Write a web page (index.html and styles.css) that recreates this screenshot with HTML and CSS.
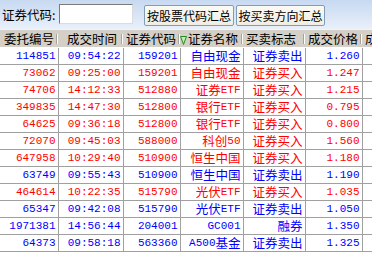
FILE: index.html
```html
<!DOCTYPE html>
<html lang="zh">
<head>
<meta charset="utf-8">
<title>成交查询</title>
<link rel="stylesheet" href="styles.css">
</head>
<body>
<div class="toolbar">
  <span class="label">证券代码:</span>
  <span class="input"></span>
  <button class="btn btn1">按股票代码汇总</button>
  <button class="btn btn2">按买卖方向汇总</button>
</div>
<table class="grid">
  <colgroup>
    <col class="w1"><col class="w2"><col class="w3"><col class="w4"><col class="w5"><col class="w6"><col class="w7">
  </colgroup>
  <thead>
    <tr>
      <th>委托编号</th>
      <th class="pl2">成交时间</th>
      <th class="pl1">证券代码</th>
      <th class="sorted"><svg class="tri" width="7" height="9" viewBox="0 0 7 9"><polygon points="0.5,0.5 6.5,0.5 3.5,8.5" fill="#c8e6b8" stroke="#1f8f1f" stroke-width="1"/></svg>证券名称</th>
      <th class="pl1">买卖标志</th>
      <th class="pl1">成交价格</th>
      <th class="pl1">成交</th>
    </tr>
  </thead>
  <tbody>
    <tr class="sell"><td>114851</td><td>09:54:22</td><td>159201</td><td><span class="c">自由现金</span></td><td><span class="c">证券卖出</span></td><td>1.260</td><td></td></tr>
    <tr class="buy"><td>73062</td><td>09:25:00</td><td>159201</td><td><span class="c">自由现金</span></td><td><span class="c">证券买入</span></td><td>1.247</td><td></td></tr>
    <tr class="buy"><td>74706</td><td>14:12:33</td><td>512880</td><td><span class="c">证券</span>ETF</td><td><span class="c">证券买入</span></td><td>1.215</td><td></td></tr>
    <tr class="buy"><td>349835</td><td>14:47:30</td><td>512800</td><td><span class="c">银行</span>ETF</td><td><span class="c">证券买入</span></td><td>0.795</td><td></td></tr>
    <tr class="buy"><td>64625</td><td>09:36:18</td><td>512800</td><td><span class="c">银行</span>ETF</td><td><span class="c">证券买入</span></td><td>0.800</td><td></td></tr>
    <tr class="buy"><td>72070</td><td>09:45:03</td><td>588000</td><td><span class="c">科创</span>50</td><td><span class="c">证券买入</span></td><td>1.560</td><td></td></tr>
    <tr class="buy"><td>647958</td><td>10:29:40</td><td>510900</td><td><span class="c">恒生中国</span></td><td><span class="c">证券买入</span></td><td>1.180</td><td></td></tr>
    <tr class="sell"><td>63749</td><td>09:55:43</td><td>510900</td><td><span class="c">恒生中国</span></td><td><span class="c">证券卖出</span></td><td>1.190</td><td></td></tr>
    <tr class="buy"><td>464614</td><td>10:22:35</td><td>515790</td><td><span class="c">光伏</span>ETF</td><td><span class="c">证券买入</span></td><td>1.035</td><td></td></tr>
    <tr class="sell"><td>65347</td><td>09:42:08</td><td>515790</td><td><span class="c">光伏</span>ETF</td><td><span class="c">证券卖出</span></td><td>1.050</td><td></td></tr>
    <tr class="sell"><td>1971381</td><td>14:56:44</td><td>204001</td><td>GC001</td><td><span class="c">融券</span></td><td>1.350</td><td></td></tr>
    <tr class="sell"><td>64373</td><td>09:58:18</td><td>563360</td><td>A500<span class="c">基金</span></td><td><span class="c">证券卖出</span></td><td>1.325</td><td></td></tr>
  </tbody>
</table>
</body>
</html>
```

FILE: styles.css
```css
html, body {
  margin: 0;
  padding: 0;
  background: #ffffff;
}
body {
  width: 372px;
  height: 259px;
  overflow: hidden;
  font-family: "Noto Sans CJK SC", "DejaVu Sans", sans-serif;
  color: #000;
}
.toolbar {
  height: 29px;
  display: flex;
  align-items: center;
  padding-left: 2px;
  background: linear-gradient(#c7d9f1, #e9f0fa);
  box-sizing: border-box;
}
.label {
  width: 57px;
  font-size: 12.5px;
  line-height: 16px;
  margin-top: 1px;
  white-space: nowrap;
}
.input {
  width: 74px;
  height: 20px;
  box-sizing: border-box;
  background: #fff;
  border: 1px solid;
  border-color: #7b7b7b #dcdcdc #dcdcdc #7b7b7b;
  margin-top: -1px;
}
.btn {
  height: 21px;
  box-sizing: border-box;
  padding: 0;
  background: linear-gradient(#fbfaf5, #efede3);
  border: 1px solid #7f9db9;
  border-radius: 2px;
  font-family: "Noto Sans CJK SC", sans-serif;
  font-size: 12px;
  line-height: 18px;
  white-space: nowrap;
  overflow: hidden;
  color: #000;
  margin-top: 2px;
}
.btn1 {
  width: 90px;
  margin-left: 11px;
}
.btn2 {
  width: 89px;
  margin-left: 2px;
}
.grid {
  border-collapse: collapse;
  table-layout: fixed;
  width: 402px;
}
.w1 { width: 58px; }
.w2 { width: 65px; }
.w3 { width: 57px; }
.w4 { width: 63px; }
.w5 { width: 62px; }
.w6 { width: 57px; }
.w7 { width: 40px; }
.grid th {
  height: 18px;
  padding: 0 0 0 4px;
  background-color: #d4d0c8;
  background-image: linear-gradient(#a7a399, #a7a399), linear-gradient(#ffffff, #ffffff);
  background-repeat: no-repeat;
  background-size: 1px 10px, 1px 10px;
  background-position: right 1px center, right 0 center;
  border-top: 1px solid #f4f3ee;
  border-bottom: 1px solid #ffffff;
  font-weight: normal;
  font-size: 12.5px;
  line-height: 16px;
  text-align: left;
  white-space: nowrap;
  overflow: hidden;
  box-sizing: border-box;
}
.grid th.pl1 { padding-left: 3px; }
.grid th.pl2 { padding-left: 9px; }
.grid th.sorted { padding-left: 0; }
.tri {
  vertical-align: -1px;
  margin-right: 1px;
}
.grid td {
  height: 16px;
  padding: 0 2px 0 0;
  text-align: right;
  border-right: 1px solid #a0a0a0;
  border-bottom: 1px solid #a0a0a0;
  font-family: "Liberation Mono", "Noto Sans CJK SC", monospace;
  font-size: 11px;
  line-height: 16px;
  white-space: nowrap;
  overflow: hidden;
}
.c {
  vertical-align: top;
  font-family: "Noto Sans CJK SC", sans-serif;
  font-size: 12.5px;
  line-height: 16px;
}
.buy td { color: #ff0000; }
.sell td { color: #0000ff; }
```
